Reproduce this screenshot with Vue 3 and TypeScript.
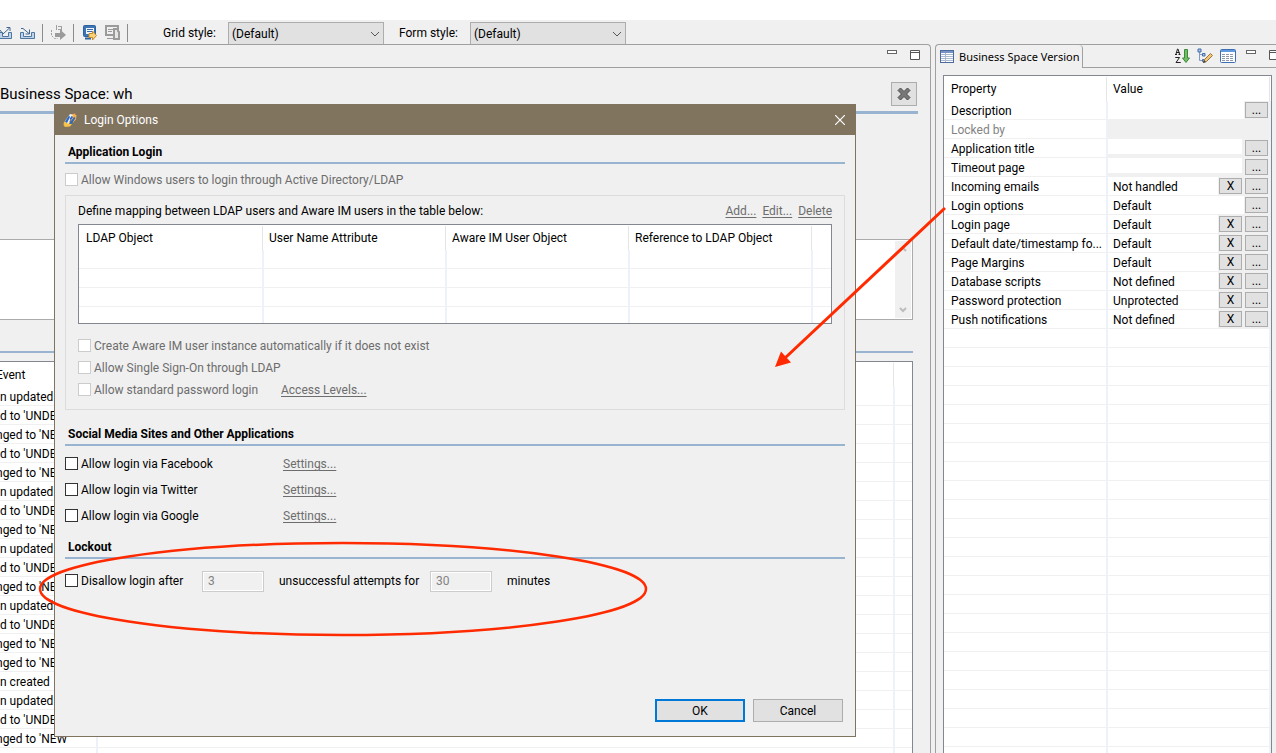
<script setup lang="ts">
interface EventRow {
  text: string
  cut: boolean
}

interface PropertyRow {
  name: string
  value: string
  clearable?: boolean
  browse?: boolean
  disabled?: boolean
  inset?: boolean
}

const updated: EventRow = { text: 'n updated', cut: false }
const toUnder: EventRow = { text: "d to 'UNDE", cut: false }
const toNew: EventRow = { text: "nged to 'NEW", cut: true }
const created: EventRow = { text: 'n created', cut: false }

const events: EventRow[] = [
  updated, toUnder, toNew, toUnder, toNew, updated, toUnder, toNew, updated, toUnder,
  toNew, updated, toUnder, toNew, toNew, created, updated, toUnder, toNew,
]

const properties: PropertyRow[] = [
  { name: 'Description', value: '', browse: true },
  { name: 'Locked by', value: '', disabled: true },
  { name: 'Application title', value: '', browse: true, inset: true },
  { name: 'Timeout page', value: '', browse: true, inset: true },
  { name: 'Incoming emails', value: 'Not handled', clearable: true, browse: true },
  { name: 'Login options', value: 'Default', browse: true },
  { name: 'Login page', value: 'Default', clearable: true, browse: true },
  { name: 'Default date/timestamp fo...', value: 'Default', clearable: true, browse: true },
  { name: 'Page Margins', value: 'Default', clearable: true, browse: true },
  { name: 'Database scripts', value: 'Not defined', clearable: true, browse: true },
  { name: 'Password protection', value: 'Unprotected', clearable: true, browse: true },
  { name: 'Push notifications', value: 'Not defined', clearable: true, browse: true },
]

const ldapColumns = ['LDAP Object', 'User Name Attribute', 'Aware IM User Object', 'Reference to LDAP Object']
const providers = ['Facebook', 'Twitter', 'Google']
</script>

<template>
  <div class="app">
    <div class="toolbar">
      <button class="tool" aria-label="Export">
        <svg width="12" height="16" viewBox="4 0 12 16">
          <path d="M3 7.500h3.500v4h6v-4h3v6h-13z" fill="#bcd3ea" stroke="#51769f" />
          <path d="M4 5l3 4 6.500-6M10.500 2.500h3.500v3.500" fill="none" stroke="#3f678f" />
        </svg>
      </button>
      <button class="tool" aria-label="Import">
        <svg width="16" height="16" viewBox="0 0 16 16">
          <path d="M1.500 7.500v6h14v-6h-3v4h-8v-4z" fill="#bcd3ea" stroke="#51769f" />
          <path d="M2 3.500h2l6 5M10.500 4.500v4.500h-4" fill="none" stroke="#3f678f" />
        </svg>
      </button>
      <span class="sep"></span>
      <button class="tool" aria-label="Publish">
        <svg width="16" height="16" viewBox="-2 0 16 16">
          <path d="M4.500 5V0M9.500 1v5M6 1.500h3M6 4.500h3" fill="none" stroke="#a0a0a0" />
          <path d="M-.5 5v5.500l3 3h3" fill="none" stroke="#a0a0a0" stroke-dasharray="2 1" />
          <path d="M3 8h5V4.500l6 5.500-6 5v-3H3z" fill="#9b9b9b" />
        </svg>
      </button>
      <span class="sep"></span>
      <button class="tool" aria-label="Run">
        <svg width="16" height="16" viewBox="-2 0 16 16">
          <rect x=".5" y=".5" width="12" height="11" rx="1" fill="#3d74b5" stroke="#2d629f" />
          <path d="M3 3h8v6H3z" fill="#eef5fc" />
          <path d="M4 4.500h6M4 6.500h5" stroke="#3b6ca4" />
          <path d="M2 13.500h6" stroke="#2d629f" stroke-width="2" />
          <path d="M6 8.500h3.500V6l4 4.500-4 4.500v-2.500H6z" fill="#fbd277" stroke="#c68a2b" />
        </svg>
      </button>
      <button class="tool" aria-label="Copy version">
        <svg width="16" height="16" viewBox="-1 0 16 16">
          <path d="M8 10H1V1h12v2" fill="none" stroke="#9b9b9b" stroke-width="2" />
          <path d="M3 4.500h5M3 6.500h4M2 13.500h6" stroke="#9b9b9b" />
          <path d="M9 4h4v2l1 1v7H9z" fill="#e6e6e6" stroke="#9b9b9b" stroke-width="2" />
        </svg>
      </button>
      <span class="sep"></span>
      <label class="grid-label" for="grid-style">Grid style:</label>
      <span class="combo">
        <select id="grid-style"><option>(Default)</option></select>
        <svg width="10" height="6" viewBox="0 0 10 6"><path d="M1 1l4 4 4-4" fill="none" stroke="#555" /></svg>
      </span>
      <label class="form-label" for="form-style">Form style:</label>
      <span class="combo">
        <select id="form-style"><option>(Default)</option></select>
        <svg width="10" height="6" viewBox="0 0 10 6"><path d="M1 1l4 4 4-4" fill="none" stroke="#555" /></svg>
      </span>
    </div>

    <div class="work">
      <main class="editor">
        <div class="editor-tabs">
          <button class="tool" aria-label="Minimize editor">
            <svg width="10" height="10" viewBox="0 0 10 10"><rect x=".5" y=".5" width="9" height="3" fill="#fff" stroke="#666" /></svg>
          </button>
          <button class="tool" aria-label="Maximize editor">
            <svg width="10" height="10" viewBox="0 0 10 10"><path d="M.5.500h9v9h-9zM.5 2.500h9" fill="#fff" stroke="#555" /></svg>
          </button>
        </div>
        <div class="editor-head">
          <h1>Business Space: wh</h1>
          <button class="close-form" aria-label="Close form">
            <svg width="14" height="14" viewBox="0 0 14 14">
              <path d="M3.500 1L7 4.500 10.500 1 13 3.500 9.500 7l3.500 3.500-2.500 2.500L7 9.500 3.500 13 1 10.500 4.500 7 1 3.500z" fill="#777" stroke="#4c4c4c" />
            </svg>
          </button>
        </div>
        <div class="memo">
          <textarea aria-label="Description"></textarea>
          <div class="scroll">
            <svg width="8" height="6" viewBox="0 0 8 6"><path d="M1 5l3-3 3 3" fill="none" stroke="#bdbdbd" stroke-width="2" /></svg>
            <svg width="8" height="6" viewBox="0 0 8 6"><path d="M1 1l3 3 3-3" fill="none" stroke="#bdbdbd" stroke-width="2" /></svg>
          </div>
        </div>
        <div class="rule"></div>
        <div class="grid events">
          <table>
            <thead>
              <tr><th class="c-event">Event</th><th></th><th class="c-last"></th></tr>
            </thead>
            <tbody>
              <tr v-for="(e, i) in events" :key="i">
                <td :class="{ cut: e.cut }">{{ e.text }}</td><td></td><td></td>
              </tr>
              <tr class="filler"><td></td><td></td><td></td></tr>
            </tbody>
          </table>
        </div>
      </main>

      <aside class="side">
        <div class="side-tabs">
          <div class="tab">
            <svg width="14" height="13" viewBox="0 0 14 13">
              <rect x=".5" y=".5" width="13" height="12" fill="#fff" stroke="#4d6a9c" />
              <path d="M1 1h12v2H1z" fill="#7593c4" />
              <path d="M1 4.500h12M1 6.500h12M1 8.500h12M1 10.500h12M5.500 3v9" stroke="#a8b8cf" />
            </svg>
            <span>Business Space Version</span>
          </div>
          <div class="side-tools">
            <button class="tool" aria-label="Sort alphabetically">
              <svg width="16" height="16" viewBox="0 0 16 16">
                <path d="M1 6.500h2M4.500 6.500h2M2 6L3.500 1h.500L5.500 6M2.500 4.500h3M1.500 10V9.500h4L2 14.500h4.500V14" fill="none" stroke="#222" />
                <path d="M10.500 1.500h3v8.500h2l-3.500 4.500-3.500-4.500h2z" fill="#6fbf63" stroke="#3d8b3a" />
              </svg>
            </button>
            <button class="tool" aria-label="Categories">
              <svg width="16" height="16" viewBox="0 0 16 16">
                <path d="M2.500 3v9.500h4M3 6.500h4" fill="none" stroke="#7d9bc4" />
                <path d="M1 1h3v3H1zM5.500 5.500h2.500v2.500H5.500zM5.500 11.500h2v2h-2z" fill="#a9c3e6" stroke="#456fab" />
                <path d="M6.500 14.500l1-3 6-6 2 2-6 6z" fill="#efc67c" stroke="#9b7439" />
                <path d="M6 15l1-3 2 2z" fill="#444" />
              </svg>
            </button>
            <button class="tool" aria-label="Show table">
              <svg width="16" height="14" viewBox="0 0 16 14">
                <rect x=".5" y=".5" width="15" height="13" rx="1" fill="#fff" stroke="#3d6fb4" />
                <path d="M1 1h14v2H1z" fill="#5f9ae0" />
                <path d="M2 5.500h12M2 7.500h12M2 9.500h12M2 11.500h12" stroke="#8c98a8" stroke-dasharray="3 1" />
              </svg>
            </button>
            <button class="tool" aria-label="Minimize view">
              <svg width="10" height="12" viewBox="0 0 10 12"><rect x=".5" y=".5" width="9" height="3" fill="#fff" stroke="#666" /></svg>
            </button>
            <button class="tool" aria-label="Maximize view">
              <svg width="10" height="12" viewBox="0 0 10 12"><path d="M.5.500h9v9h-9zM.5 2.500h9" fill="#fff" stroke="#555" /></svg>
            </button>
          </div>
        </div>
        <div class="grid props">
          <table>
            <thead>
              <tr><th class="c-prop">Property</th><th>Value</th></tr>
            </thead>
            <tbody>
              <tr v-for="p in properties" :key="p.name">
                <td :class="{ dim: p.disabled }">{{ p.name }}</td>
                <td class="value-cell">
                  <div class="value" :class="{ inset: p.inset }">
                    <span v-if="!p.disabled" class="value-text">{{ p.value }}</span>
                    <button v-if="p.clearable" class="mini" :aria-label="'Clear ' + p.name">X</button>
                    <button v-if="p.browse" class="mini" :aria-label="'Edit ' + p.name">...</button>
                  </div>
                </td>
              </tr>
              <tr class="filler"><td></td><td></td></tr>
            </tbody>
          </table>
        </div>
      </aside>
    </div>

    <div class="dialog" role="dialog" aria-labelledby="dialog-title">
      <header class="titlebar">
        <svg width="16" height="16" viewBox="0 0 16 16">
          <path d="M2 10l3-2 5 4-2 2.500-5 .500-1.500-2z" fill="#f7c24a" />
          <path d="M9 2.500l4-1 1.500 2-.500 4-3 3-3-4z" fill="#f2b050" />
          <path d="M3 9l5-7 3 1-5 9z" fill="#e9f2fc" />
          <path d="M3 9.500l4-6 1 1.500-3 6zM7 12l5-7 1.500 1-4 6z" fill="#2c68c4" />
          <path d="M7.500 7l2-3 1.500 1-2 3z" fill="#2c68c4" />
          <path d="M13 1l1.500 1.500-1 .500z" fill="#d9542f" />
        </svg>
        <span id="dialog-title">Login Options</span>
        <button class="tool" aria-label="Close">
          <svg width="10" height="10" viewBox="0 0 10 10"><path d="M0 0l10 10M10 0L0 10" fill="none" stroke="#fff" stroke-width="1.200" /></svg>
        </button>
      </header>

      <div class="body">
        <h2>Application Login</h2>
        <label class="check top-check"><input type="checkbox" disabled />Allow Windows users to login through Active Directory/LDAP</label>

        <section class="group">
          <div class="group-head">
            <span>Define mapping between LDAP users and Aware IM users in the table below:</span>
            <nav><a href="#">Add...</a><a href="#">Edit...</a><a href="#">Delete</a></nav>
          </div>
          <div class="grid ldap">
            <table>
              <thead>
                <tr><th v-for="c in ldapColumns" :key="c">{{ c }}</th><th class="c-rest"></th></tr>
              </thead>
              <tbody>
                <tr v-for="n in 3" :key="n"><td v-for="m in 5" :key="m"></td></tr>
                <tr class="filler"><td v-for="m in 5" :key="m"></td></tr>
              </tbody>
            </table>
          </div>
          <div class="options">
            <label class="check"><input type="checkbox" disabled />Create Aware IM user instance automatically if it does not exist</label>
            <label class="check"><input type="checkbox" disabled />Allow Single Sign-On through LDAP</label>
            <div class="pair password">
              <label class="check"><input type="checkbox" disabled />Allow standard password login</label>
              <a href="#">Access Levels...</a>
            </div>
          </div>
        </section>

        <h2 class="social">Social Media Sites and Other Applications</h2>
        <div class="providers">
          <div v-for="p in providers" :key="p" class="pair provider">
            <label class="check"><input type="checkbox" />Allow login via {{ p }}</label>
            <a href="#">Settings...</a>
          </div>
        </div>

        <h2 class="lock">Lockout</h2>
        <div class="lockout">
          <label class="check disallow"><input type="checkbox" />Disallow login after</label>
          <input id="attempts" class="num" type="text" value="3" disabled />
          <label class="attempts" for="attempts">unsuccessful attempts for</label>
          <input id="minutes" class="num" type="text" value="30" disabled />
          <label class="minutes" for="minutes">minutes</label>
        </div>

        <footer>
          <button class="btn primary">OK</button>
          <button class="btn">Cancel</button>
        </footer>
      </div>
    </div>

    <svg class="marks" width="1276" height="753" viewBox="0 0 1276 753" aria-hidden="true">
      <path d="M945 208L785 358" fill="none" stroke="#ff2a00" stroke-width="3" />
      <path d="M775 367l6-15.500 10 11z" fill="#ff2a00" />
      <ellipse cx="343" cy="589" rx="303" ry="46" fill="none" stroke="#ff2a00" stroke-width="2.500" />
    </svg>
  </div>
</template>

<style>
body {
  margin: 0;
  background: #f0f0f0;
}
</style>

<style scoped>
.app {
  position: relative;
  display: flex;
  flex-direction: column;
  height: 100vh;
  overflow: hidden;
  background: #f0f0f0;
  border-top: 20px solid #fff;
  box-sizing: border-box;
  color: #000;
  font: 12px/18px Roboto, "Noto Sans", sans-serif;
}
.app *,
.app *::before {
  box-sizing: border-box;
}
button,
input,
select,
textarea {
  font: inherit;
  color: inherit;
}
a {
  color: #6d6d6d;
  text-underline-offset: 2px;
}
svg {
  display: block;
  flex: none;
}
.tool {
  display: block;
  padding: 0;
  border: 0;
  background: none;
}

/* toolbar */
.toolbar {
  display: flex;
  align-items: center;
  gap: 7px;
  height: 24px;
  padding-top: 2px;
}
.sep {
  width: 1px;
  height: 18px;
  background: #8c8c8c;
}
.grid-label {
  width: 58px;
  margin-left: 28px;
}
.form-label {
  width: 64px;
  margin-left: 8px;
}
.combo {
  position: relative;
  width: 156px;
  height: 22px;
}
.combo select {
  appearance: none;
  display: block;
  width: 100%;
  height: 22px;
  padding: 0 3px;
  border: 1px solid #adadad;
  border-bottom: 0;
  border-radius: 0;
  background: #e1e1e1;
}
.combo svg {
  position: absolute;
  right: 4px;
  top: 9px;
  pointer-events: none;
}

/* work area */
.work {
  flex: 1;
  min-height: 0;
  display: grid;
  grid-template-columns: minmax(0, 1fr) 341px;
  gap: 4px;
}
.editor,
.side {
  display: flex;
  flex-direction: column;
  min-width: 0;
  min-height: 0;
  border-top: 1px solid #a0a0a0;
}
.editor {
  border-right: 1px solid #a0a0a0;
  border-top-right-radius: 4px;
}
.side {
  border-left: 1px solid #a0a0a0;
  border-top-left-radius: 4px;
  overflow: hidden;
}
.editor-tabs {
  display: flex;
  align-items: flex-start;
  justify-content: flex-end;
  gap: 13px;
  height: 23px;
  padding: 5px 10px 0 0;
  border-bottom: 1px solid #a0a0a0;
}
.editor-head {
  display: flex;
  align-items: center;
  justify-content: space-between;
  height: 46px;
  padding-top: 8px;
  margin-right: 12px;
  border-bottom: 3px solid #99b4d1;
}
h1 {
  margin: 0;
  font-size: 15px;
  font-weight: 400;
}
.close-form {
  display: flex;
  align-items: center;
  justify-content: center;
  width: 26px;
  height: 24px;
  padding: 0;
  margin-right: 1px;
  border: 1px solid #adadad;
  background: #e1e1e1;
}
.memo {
  display: flex;
  flex: none;
  height: 81px;
  margin: 125px 17px 0 0;
  padding: 1px;
  border: 1px solid #ababab;
  border-left: 0;
  background: #fff;
}
.memo textarea {
  flex: 1;
  padding: 0;
  border: 0;
  resize: none;
  overflow: hidden;
}
.scroll {
  display: flex;
  flex-direction: column;
  align-items: center;
  justify-content: space-between;
  width: 16px;
  padding: 5px 0;
  background: #f0f0f0;
}
.rule {
  flex: none;
  height: 2px;
  margin: 31px 17px 8px 0;
  background: #99b4d1;
}

/* tables */
.grid {
  border: 1px solid #828790;
  background: repeating-linear-gradient(#fff 0 18px, #f0f0f0 18px 19px) 0 25px #fff;
  overflow: hidden;
}
.grid table {
  width: 100%;
  height: 100%;
  table-layout: fixed;
  border-spacing: 0;
}
th {
  height: 25px;
  padding: 0 5px;
  background: linear-gradient(#e5e5e5, #e5e5e5) right 1px top 1px / 1px 24px no-repeat #fff;
  font-weight: 400;
  text-align: left;
  white-space: nowrap;
}
th:first-child {
  padding-left: 7px;
}
td {
  height: 19px;
  padding: 1px 0 0 7px;
  border-right: 2px solid #edf2fa;
  line-height: 18px;
  vertical-align: top;
  white-space: nowrap;
}
.filler td {
  height: auto;
}
.events {
  flex: 1;
  min-height: 0;
  margin-right: 17px;
  border-left: 0;
  border-bottom: 0;
}
.events td,
.events th {
  padding-left: 0;
}
.events .c-event {
  width: 98px;
  text-indent: -4px;
}
.events .c-last {
  width: 17px;
}
.events th:first-child,
.events th:last-child,
.ldap th:last-child {
  background: #fff;
}
.events td:last-child,
.ldap td:last-child {
  border-right: 0;
}
.cut {
  text-indent: -4px;
}

/* property view */
.side-tabs {
  display: flex;
  height: 23px;
  flex: none;
}
.tab {
  display: flex;
  align-items: center;
  gap: 5px;
  width: 147px;
  padding-left: 4px;
  border-right: 1px solid #a0a0a0;
  border-top-right-radius: 4px;
  font-family: "Noto Sans", sans-serif;
  font-size: 11px;
  white-space: nowrap;
}
.side-tools {
  flex: 1;
  display: flex;
  align-items: center;
  justify-content: flex-end;
  gap: 7px;
  border-bottom: 1px solid #a0a0a0;
}
.side-tools .tool:nth-last-child(2) {
  margin: 0 6px 0 3px;
}
.side-tools .tool:last-child {
  width: 7px;
}
.props {
  flex: 1;
  min-height: 0;
  margin: 7px 4px 0 7px;
  border-bottom: 0;
}
.props .c-prop {
  width: 164px;
}
.dim {
  color: #838383;
}
.value-cell {
  padding: 0;
  background: #f0f0f0;
}
.value {
  display: flex;
  align-items: flex-start;
  justify-content: flex-end;
  gap: 3px;
  height: 18px;
  padding-right: 1px;
}
.value-text {
  flex: 1;
  height: 18px;
  margin-right: -2px;
  padding: 1px 0 0 5px;
  background: #fff;
}
.inset .value-text {
  height: 15px;
  margin-right: 0;
}
.mini {
  width: 23px;
  height: 16px;
  margin-top: 1px;
  padding: 0;
  border: 1px solid #adadad;
  background: #e1e1e1;
  line-height: 14px;
  text-align: center;
}

/* dialog */
.dialog {
  position: absolute;
  left: 54px;
  top: 84px;
  width: 802px;
  max-width: calc(100% - 54px);
  border: 1px solid #80745f;
  background: #f0f0f0;
}
.titlebar {
  display: flex;
  align-items: center;
  gap: 6px;
  height: 30px;
  padding: 0 10px 0 7px;
  background: #80745f;
  color: #fff;
}
.titlebar .tool {
  margin-left: auto;
}
.body {
  padding: 7px 10px 14px;
}
h2 {
  height: 22px;
  margin: 0;
  padding-left: 3px;
  border-bottom: 2px solid #99b4d1;
  font-size: 12px;
  line-height: 20px;
  font-weight: 700;
}
.check {
  display: flex;
  align-items: center;
  gap: 3px;
  white-space: nowrap;
}
.check:has(input:disabled) {
  color: #6d6d6d;
}
.check input {
  appearance: none;
  width: 13px;
  height: 13px;
  margin: 0 0 1px;
  border: 1px solid #333;
  background: #fff;
}
.check input:disabled {
  border-color: #ccc;
}
.top-check {
  margin-top: 7px;
}
.group {
  margin-top: 6px;
  padding: 6px 12px 8px;
  border: 1px solid #dcdcdc;
}
.group-head {
  display: flex;
  justify-content: space-between;
}
.group-head nav {
  display: flex;
  gap: 6px;
}
.ldap {
  height: 100px;
  margin-top: 4px;
}
.ldap th {
  width: 183px;
}
.ldap .c-rest {
  width: auto;
}
.ldap th:first-child {
  width: 185px;
}
.options {
  margin-top: 11px;
}
.options .check {
  height: 22px;
}
.pair {
  display: grid;
  align-items: center;
}
.password {
  grid-template-columns: 203px auto;
  justify-content: start;
}
.social {
  margin-top: 14px;
}
.providers {
  margin-top: 5px;
}
.provider {
  grid-template-columns: 218px auto;
  justify-content: start;
  height: 26px;
}
.lock {
  margin-top: 8px;
}
.lockout {
  display: flex;
  align-items: center;
  height: 22px;
  margin-top: 11px;
}
.disallow {
  width: 137px;
}
.num {
  width: 62px;
  height: 21px;
  padding: 0 5px;
  border: 1px solid #ccc;
  border-radius: 0;
  background: #f0f0f0;
  box-shadow: inset 0 0 0 1px #fff;
  color: #838383;
}
.attempts {
  width: 166px;
  padding-left: 15px;
}
.minutes {
  padding-left: 15px;
}
footer {
  display: flex;
  justify-content: flex-end;
  gap: 8px;
  margin-top: 107px;
  padding-right: 2px;
}
.btn {
  width: 90px;
  height: 23px;
  padding: 0;
  border: 1px solid #adadad;
  background: #e1e1e1;
}
.btn.primary {
  border: 2px solid #0078d7;
}

.marks {
  position: absolute;
  left: 0;
  top: -20px;
  pointer-events: none;
}
</style>
